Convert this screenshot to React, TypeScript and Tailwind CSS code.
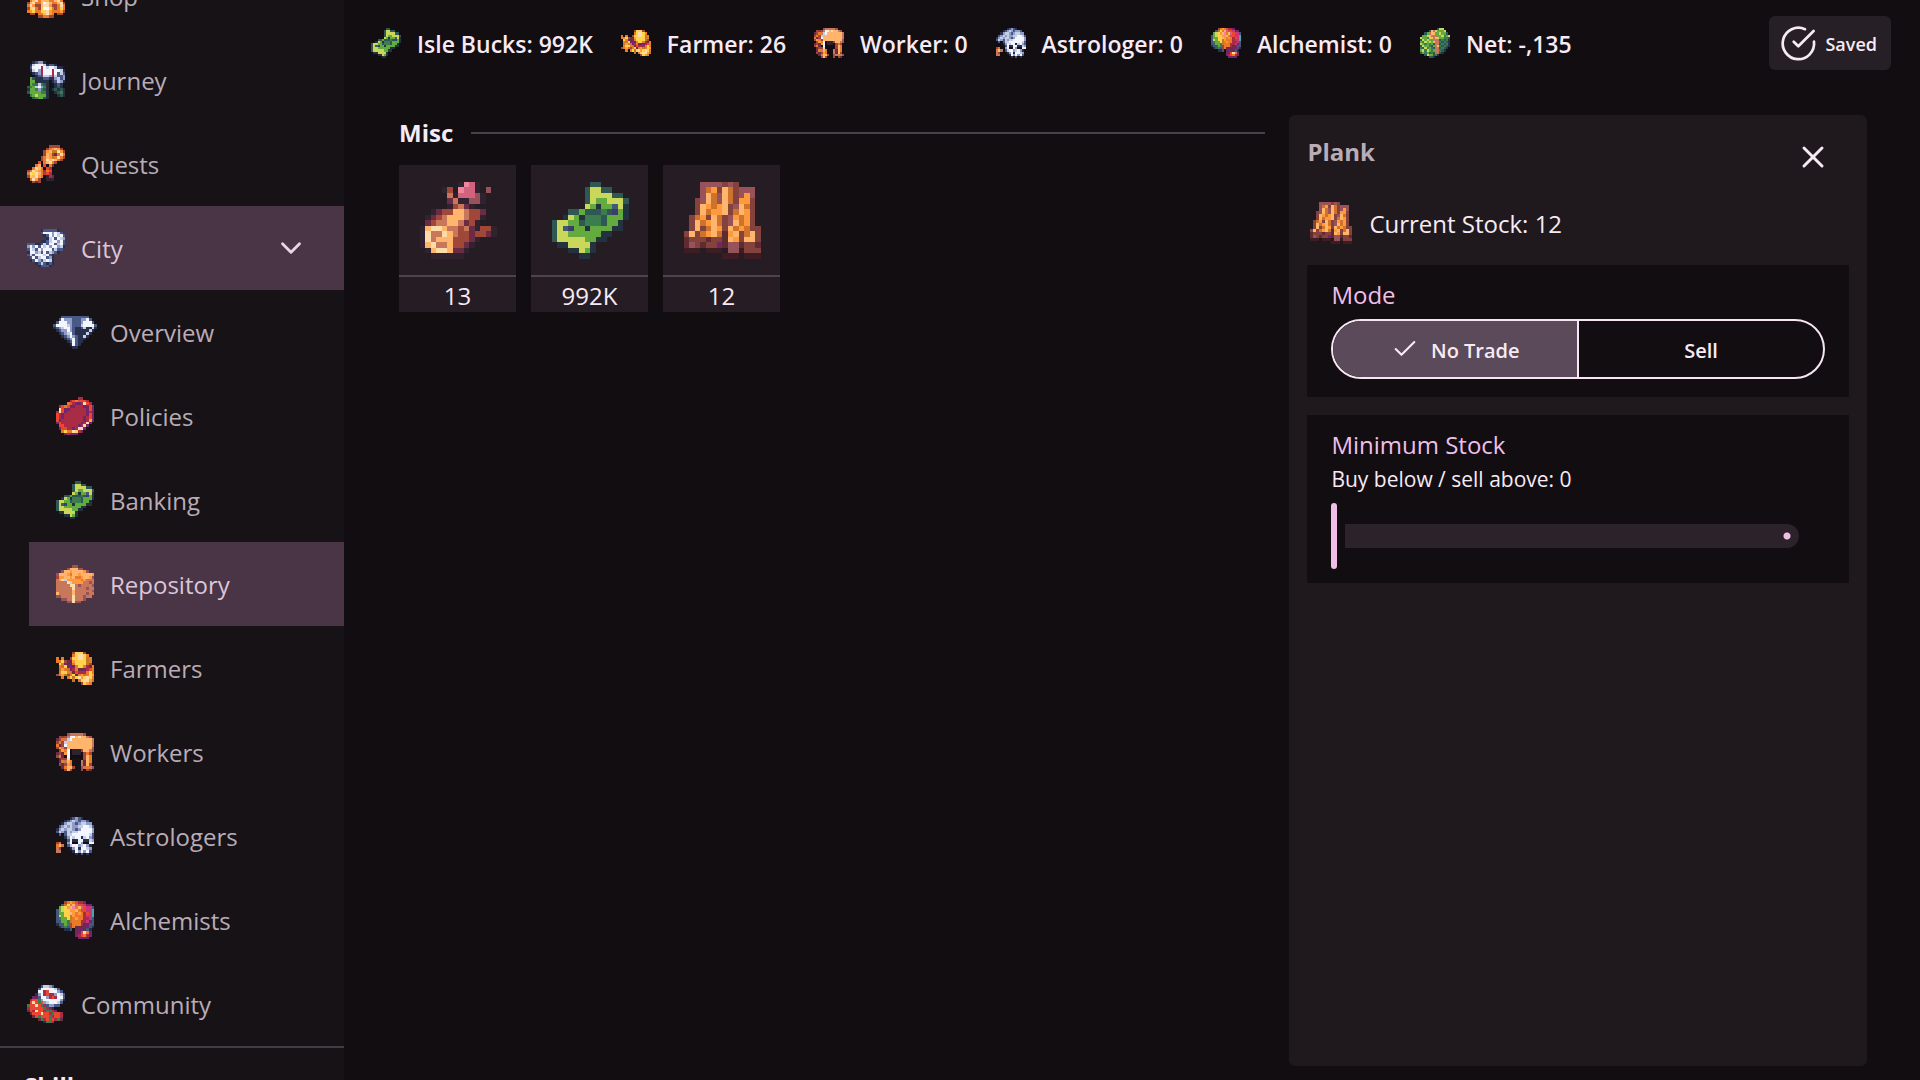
import { useState } from 'react';
import { Check, ChevronDown, X } from 'lucide-react';
import clsx from 'clsx';

const palette: Record<string, string> = {
    K: '#140d15', k: '#30222f', n: '#26304d', N: '#4a5888', b: '#8f9cc6', w: '#c6cee6', W: '#f3f6ff',
    r: '#a92c44', R: '#ec4630', o: '#e97a28', O: '#ff9a3c', L: '#ffb56c', F: '#fddcaa', Y: '#ffd24c',
    y: '#c47a24', z: '#cf722c', C: '#c9775a', c: '#a0473a', d: '#6b2b42', e: '#5f2a30', m: '#98525a',
    s: '#84423c', u: '#3e1c24', g: '#63ab3f', G: '#3b7d4f', t: '#2f5753', T: '#23323f', l: '#cbd75a',
    B: '#40587a', P: '#3a3f68', p: '#d2637f', q: '#ee86a0', v: '#74246a', M: '#c8347c', i: '#46a8a8',
};

// 16x16 pixel maps, one palette key per cell
const sprites = {
    shop: [
        '................', '....cooooooc....', '...cOLLLLLLOc...', '..coLFFFFFFLoc..',
        '..oLFYYYYYYFLo..', '.coOOOOOOOOOOoc.', '.cLoFoLoFoLoFoc.', '.cyoyoyoyoyoyoc.',
        '..oLLoooooLLLo..', '..oLFoLLLooLFo..', '.cLFooLWFLooLFc.', '.oFOccLFFOccoFo.',
        '.cYFocYWWYocoYo.', '.oOYooYYFOoooOc.', '..cc.ooLFOo.cc..', '.....ccoocc.....',
    ],
    journey: [
        '................', '...nNbbn........', '..nwWWWwnNNn....', '..NWWWrWwWWwnn..',
        '..nwWbrWWWrWWwn.', '...nNbrWWWrWNwN.', '....nNNwwbrwNNb.', '..gtnnnNNnnbwNb.',
        '..ggTnnnT.nNwbn.', '..gGNwGtT..nNn..', '.tGgwWbGT..TtT..', '.TggGbGtT.TtTtT.',
        '.tggggGGT..TtGT.', '..GglgggT...TtT.', '...tGggtT.......', '................',
    ],
    quests: [
        '................', '.........cccc...', '........coOLOc..', '.......cOLyyFOc.',
        '.......cLOcdoFo.', '......coLOyoFoc.', '.....KcoFLFLoc..', '.....RKoLFoc....',
        '....oLKRKod.....', '...oFLoKRrK.....', '.coFLOoroRK.....', '.oFYFLocRr......',
        '.cYLFOo.krd.....', '..oFOc..kkk.....', '...cdc..........', '................',
    ],
    city: [
        '................', '......nNNNNNn...', '......NWWWbWwN..', '.......nNWbWwWN.',
        '........nwWNWwb.', '......nnNwWWbWN.', '.NNNnnNwNWWNwWN.', '.bWbWNWwWbWWbwn.',
        '.NWwNWbWWWNwNN..', '.nWWbwNWNwbNn...', '.NwNWWWwWNn.....', '..NWNwWWNbn.....',
        '..nNWbNwWwn.....', '....nNwNnNn.....', '.....nNNNn......', '................',
    ],
    diamond: [
        '................', '................', '...NNNNNNNNNN...', '..NWbbbNNNbbWN..',
        '.NWWWbbNNNbWWWN.', 'NWWWWwbNNNwWWWWN', 'nNbwWWbNnnNwnnwn', '.nNbbWbNnnnnnwn.',
        '..nNbwWNnnnnwn..', '...nNbWbNnnwn...', '....nNbWNnnn....', '.....nNWNnn.....',
        '......nWNn......', '.......nn.......', '................', '................',
    ],
    seal: [
        '................', '.........rr.....', '......rRoRRRr...', '.....oRrvvrFRr..',
        '..rRoRvvrrrvvRv.', '..FRvvrrrrrrvRv.', '.rFRvrrrrrrrvrv.', '.RrvrrrrrrrrvRv.',
        '.RrvrrrrrrrvrRv.', '.RvrrrrrrrrvrOv.', '.vRrrrrrrrvrFv..', '..RRrrrrrvrFv...',
        '..vRRrrvrFFv....', '...oYooFYrv.....', '....vrvvv.......', '................',
    ],
    bill: [
        '................', '........tt......', '.......tlltt....', '.......tlllltt..',
        '.......tlgglllt.', '.......lgTggBlT.', '....ttgtttGtPgT.', '...TlgTGGGtgggT.',
        '.tllggtGGGtggT..', '.tlBPggTggggTT..', '.tllggggggTT....', '.tlllllggTT.....',
        '..TTllllT.......', '....TTlgT.......', '......TT........', '................',
    ],
    box: [
        '................', '.......mm.......', '.....mLLLmm.....', '...mLLOLLLLOm...',
        '.mLLLOoLLOLLLLO.', '.cOOLLOLooOLLOm.', '.COFwOOOOOoOCCC.', '.CCCCFwOOOOCCmC.',
        '.CCCCCFFCmCCCCm.', '.CCCCCCFCCCCmCC.', '.CCCCCCLCCCCCCm.', '.LCCCCCLCCCCmCC.',
        '.mmCCCCFCCCmCCd.', '...mmCCFCCCm....', '.....mmFmm......', '................',
    ],
    farmer: [
        '................', '................', '.......cYYYc....', '.......oYFFYo...',
        '.o.o..cYYFFYyo..', '.ooYcddOYYYYyo..', '..YovdvoYYYYyc..', '..oyYvvvoYYordo.',
        '..yOoyvroddvrRo.', '..oYYoydRrrroYo.', '.coOycoYdoOyoYO.', '...o.oYyYFOYFYo.',
        '.......y.oYFFOy.', '..........cYOo..', '................', '................',
    ],
    worker: [
        '................', '.....mCCCCCm....', '..cscCWWLFLLCm..', '.dcoCwWLLLLLLLC.',
        '.cocwLLLLLLLLLC.', '.odcWLLLLLLLLLC.', '.cOocLLLLLLLLLm.', '..cOoWKkkkcLLCm.',
        '.dcdOWKkkkKcoc..', '.cod.WKKKKKcLo..', '..dccFK...KcLo..', '..doCLo...CdLo..',
        '..cdcOo...CdLc..', '...doLLc..mCoCm.', '....cLc...c.cd..', '................',
    ],
    skull: [
        '................', '......nNbNn.....', '....nNbwbNbbN...', '...nbwwbNbwwbb..',
        '..NbwbwbbwwWWwN.', '.nbwbwwbNbWWWWb.', '.NwbNwbwwWWWWWb.', '..N.NwwWWWWWWwN.',
        '....nbWwWWnwWbN.', '.....NWnnWWnnwb.', '.cC..bWKKWbKKWW.', '.oLC.NwWWbwWbn..',
        '.Cc...nbWnWWwb..', '.CC....nWbWbWN..', '........n.N.n...', '................',
    ],
    brain: [
        '................', '....coOoRrrv....', '...ByYoLpRRMvv..', '..glYOLqoLpRMMB.',
        '.BglYYOOLoRRMMi.', '.BggYYLOoOorRMi.', '.BlgYYyOooorMMi.', '.BGggYyoOoorrMB.',
        '.BBggGyooorrMvB.', '.nBBgGcooordvBB.', '..nBGBcodddvvBn.', '....nnB.dvvdBn..',
        '........vvRFov..', '........vrRorv..', '.........vvvv...', '................',
    ],
    community: [
        '................', '......NwwbN.....', '.....NWWWWWwN...', '.....WWrRWWWbN..',
        '....nbWrRrrbWwN.', '...vdNWWbrRrWWN.', '..rRRGbWWWWWWbn.', '..RFRGRbwWWWwN..',
        '.GRRFRGrNbbNN...', '.rRRRRRGrvn.....', '.dRrFRRrGGrv....', '..dRRRFRRrGRRr..',
        '...dRGRRRGrRRr..', '.....dGrRGRrGd..', '.......nGGr.....', '................',
    ],
    net: [
        '................', '.........tll....', '.....tLClgggl...', '...tgCLLgglggt..',
        '..gglLCCCgglGgl.', '.lggGlLCLlggGGt.', '.tlglggCCCtGtGn.', '.gGlglgLCCGtGtn.',
        '.lgGgGgtCCtGtGn.', '.tlggGtgCLGtGtn.', '.GtlGgGtCCtGtn..', '.glGlgGgCCGtn...',
        '.tgGgtGtCCtn....', '...tlggtGn......', '.....ttn........', '................',
    ],
    log: [
        '................', '........kqpk....', '.....kc.qppk.m..', '......Ckpppmk...',
        '......dCkkmmk...', '......kcCdk.....', '...kdccLLCccd...', '..kdcCLLLCcck...',
        '..dcCCLLCdck....', '.kLFFLCCcCdkcck.', '.kFCCFLCccdccdk.', '.kFCLLLcccdk....',
        '.kLFCCLccdk.....', '..kLFFLddk......', '...kkkkkk.......', '................',
    ],
    plank: [
        '................', '....mmmmsms.....', '....mzOsLzsmmm..', '....mLzmLzsmOm..',
        '...smLzmLzsOOs..', '...sLOzOLsmLzs..', '...sLzOOLszLOs..', '..szOsLzsmOzOs..',
        '..sLzOLzsmLzOs..', '..sLszLOsLzOzss.', '.sLszOLzeOLszLs.', '.esssesseLOsLLs.',
        '.emsessvemmesse.', '.uuu.uuu.mmusss.', '........uuu.uuu.', '................',
    ],
};

type SpriteName = keyof typeof sprites;

function Sprite({ name, className }: { name: SpriteName; className: string }) {
    return (
        <svg viewBox="0 0 16 16" shapeRendering="crispEdges" className={clsx('shrink-0', className)} aria-hidden="true">
            {sprites[name].map((row, y) =>
                [...row].map((key, x) =>
                    palette[key] ? <rect key={`${x}-${y}`} x={x} y={y} width={1} height={1} fill={palette[key]} /> : null
                )
            )}
        </svg>
    );
}

type NavItem = { name: string; icon: SpriteName; active?: boolean; children?: NavItem[] };

const navigation: NavItem[] = [
    { name: 'Shop', icon: 'shop' },
    { name: 'Journey', icon: 'journey' },
    { name: 'Quests', icon: 'quests' },
    {
        name: 'City',
        icon: 'city',
        active: true,
        children: [
            { name: 'Overview', icon: 'diamond' },
            { name: 'Policies', icon: 'seal' },
            { name: 'Banking', icon: 'bill' },
            { name: 'Repository', icon: 'box', active: true },
            { name: 'Farmers', icon: 'farmer' },
            { name: 'Workers', icon: 'worker' },
            { name: 'Astrologers', icon: 'skull' },
            { name: 'Alchemists', icon: 'brain' },
        ],
    },
    { name: 'Community', icon: 'community' },
];

const resources: { label: string; value: string; icon: SpriteName }[] = [
    { label: 'Isle Bucks', value: '992K', icon: 'bill' },
    { label: 'Farmer', value: '26', icon: 'farmer' },
    { label: 'Worker', value: '0', icon: 'worker' },
    { label: 'Astrologer', value: '0', icon: 'skull' },
    { label: 'Alchemist', value: '0', icon: 'brain' },
    { label: 'Net', value: '-,135', icon: 'net' },
];

const items: { name: string; icon: SpriteName; count: string }[] = [
    { name: 'Log', icon: 'log', count: '13' },
    { name: 'Isle Bucks', icon: 'bill', count: '992K' },
    { name: 'Plank', icon: 'plank', count: '12' },
];

function NavLink({ item }: { item: NavItem }) {
    return (
        <a
            href="#"
            className={clsx(
                'flex h-[84px] items-center gap-[13px] pl-6 pr-9 text-2xl',
                item.active ? 'bg-[#493545] text-[#dcc5d9]' : 'text-[#b9acb6]'
            )}
        >
            <Sprite name={item.icon} className="size-11" />
            <span className="pt-0.5">{item.name}</span>
            {item.children && <ChevronDown className="ml-auto size-[34px] text-[#ecd3e8]" />}
        </a>
    );
}

function Sidebar() {
    return (
        <aside className="h-full w-[344px] shrink-0 overflow-hidden bg-[#171216]">
            <nav className="-mt-[46px] border-b-2 border-[#443b42]">
                {navigation.map((item) => (
                    <div key={item.name}>
                        <NavLink item={item} />
                        {item.children && (
                            <div className="pl-[29px]">
                                {item.children.map((child) => (
                                    <NavLink key={child.name} item={child} />
                                ))}
                            </div>
                        )}
                    </div>
                ))}
            </nav>
            <h2 className="px-6 pt-[22px] text-2xl font-bold text-[#f7eaf4]">Skills</h2>
        </aside>
    );
}

function TopBar() {
    return (
        <header className="flex h-[86px] shrink-0 items-center justify-between pl-[25px] pr-[29px]">
            <ul className="flex items-center gap-[26px]">
                {resources.map((resource) => (
                    <li key={resource.label} className="flex items-center gap-3.5 whitespace-nowrap text-[23px] font-semibold">
                        <Sprite name={resource.icon} className="size-[34px]" />
                        <span className="pt-0.5">{resource.label}: {resource.value}</span>
                    </li>
                ))}
            </ul>
            <button className="flex h-[54px] items-center gap-2 rounded-md bg-[#271f26] pl-2.5 pr-3.5 text-lg font-semibold">
                <svg viewBox="0 0 38 38" className="size-[38px]" fill="none" stroke="currentColor" strokeWidth="2.7" strokeLinecap="round" strokeLinejoin="round">
                    <path d="M26 5.2A15.7 15.7 0 1 0 35 17.7" />
                    <path d="m14.7 17.7 4.6 4.6L34.6 7" />
                </svg>
                <span className="pt-0.5">Saved</span>
            </button>
        </header>
    );
}

function ItemGrid() {
    return (
        <section>
            <div className="flex items-center gap-[18px]">
                <h2 className="text-2xl/9 font-bold">Misc</h2>
                <div className="h-0.5 flex-1 bg-[#484147]" />
            </div>
            <div className="mt-3.5 flex flex-wrap gap-[15px]">
                {items.map((item) => (
                    <button key={item.name} aria-label={item.name} className="w-[117px] bg-[#261d24]">
                        <span className="flex h-28 items-center justify-center border-b-2 border-[#4c454b]">
                            <Sprite name={item.icon} className="size-[88px]" />
                        </span>
                        <span className="block pt-[3px] text-2xl/8">{item.count}</span>
                    </button>
                ))}
            </div>
        </section>
    );
}

function DetailPanel() {
    const [mode, setMode] = useState('No Trade');
    const [stock, setStock] = useState(0);

    return (
        <section className="flex flex-col rounded-md bg-[#1f191d] px-[18px] pt-[18px]">
            <div className="flex h-12 items-center justify-between pr-[18px]">
                <h2 className="h-full pt-px text-2xl/9 font-bold text-[#b9acb6]">Plank</h2>
                <button aria-label="Close" className="flex size-9 items-center justify-center">
                    <X className="size-9" />
                </button>
            </div>
            <div className="mt-[18px] flex items-center gap-3.5 text-2xl">
                <Sprite name="plank" className="size-12" />
                <span className="pt-0.5">Current Stock: 12</span>
            </div>

            {/* Mode */}
            <div className="mt-[18px] bg-[#120d11] px-6 pb-[18px] pt-3">
                <h3 className="text-2xl/9 text-[#f0bfe8]">Mode</h3>
                <div className="mt-1.5 flex h-[60px] overflow-hidden rounded-full border-2 border-[#f7e6f2]">
                    {['No Trade', 'Sell'].map((option) => (
                        <button
                            key={option}
                            aria-pressed={mode === option}
                            onClick={() => setMode(option)}
                            className={clsx(
                                'flex flex-1 items-center justify-center gap-3 border-[#f7e6f2] text-xl font-semibold not-first:border-l-2',
                                mode === option && 'bg-[#5b4a59]'
                            )}
                        >
                            {mode === option && <Check className="size-7" strokeWidth={1.8} />}
                            <span className="pt-1">{option}</span>
                        </button>
                    ))}
                </div>
            </div>

            {/* Minimum stock */}
            <div className="mt-[18px] bg-[#120d11] px-6 pb-3.5 pt-3">
                <h3 className="text-2xl/9 text-[#f0bfe8]">Minimum Stock</h3>
                <label htmlFor="minimum-stock" className="block text-[21px]/8">Buy below / sell above: {stock}</label>
                <div className="mt-2 pr-[26px]">
                    <input
                        id="minimum-stock"
                        type="range"
                        min={0}
                        max={100}
                        value={stock}
                        onChange={(e) => setStock(Number(e.target.value))}
                        className="block h-[66px] w-full appearance-none bg-transparent [&::-webkit-slider-runnable-track]:h-6 [&::-webkit-slider-runnable-track]:rounded-full [&::-webkit-slider-runnable-track]:bg-[#2c222a] [&::-webkit-slider-runnable-track]:bg-[radial-gradient(circle_at_calc(100%-12px)_50%,#f0bfe8_3px,transparent_4px)] [&::-webkit-slider-thumb]:-mt-[21px] [&::-webkit-slider-thumb]:h-[66px] [&::-webkit-slider-thumb]:w-1.5 [&::-webkit-slider-thumb]:appearance-none [&::-webkit-slider-thumb]:rounded-full [&::-webkit-slider-thumb]:bg-[#f0bfe8] [&::-webkit-slider-thumb]:shadow-[0_0_0_8px_#120d11]"
                    />
                </div>
            </div>
        </section>
    );
}

export default function App() {
    return (
        <div className="flex h-screen overflow-hidden bg-[#120d11] font-['Open_Sans','Noto_Sans',sans-serif] text-[#f7eaf4]">
            <Sidebar />
            <main className="flex min-w-0 flex-1 flex-col">
                <TopBar />
                <div className="mt-[29px] grid flex-1 grid-cols-[3fr_2fr] gap-6 pb-3.5 pl-[55px] pr-[53px]">
                    <ItemGrid />
                    <DetailPanel />
                </div>
            </main>
        </div>
    );
}
